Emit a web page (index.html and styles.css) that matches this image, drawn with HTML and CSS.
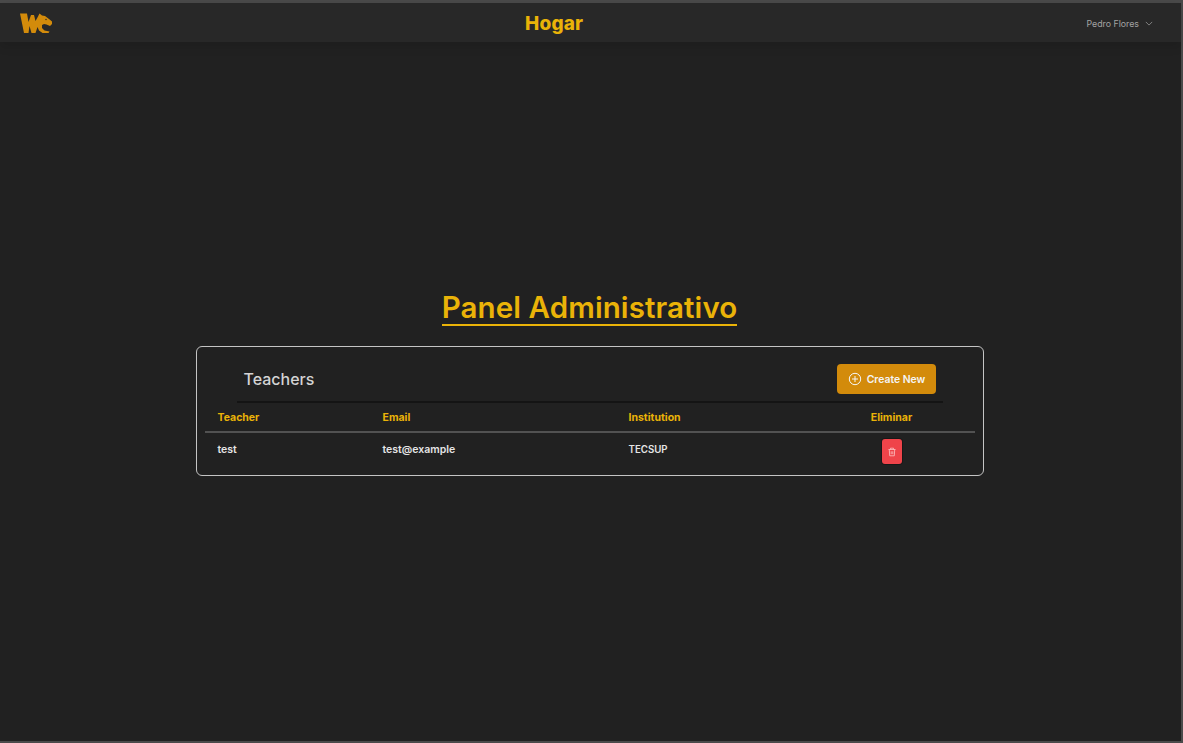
FILE: index.html
```html
<!DOCTYPE html>
<html lang="es">
<head>
<meta charset="utf-8">
<title>Hogar</title>
<link rel="stylesheet" href="styles.css">
</head>
<body>
<div class="frame">
  <header class="topbar">
    <svg class="logo" viewBox="20 11 33 22" aria-hidden="true">
      <path class="logo-fill" d="M20 12.500L27 12.500L28.500 21L31 14L34 14L35.500 20L38 15.500L39.500 12.500L42 14.500L45 15L49 18L52 20.500L52 23L50 25L46.500 23.500L44 23L42 24L42 27L44.500 29.500L49.500 30.500L48.500 32L42.500 32L39 29.500L37.500 26L35.500 32L31.500 32L29.500 25L28.500 32L24 32Z"/>
      <circle class="logo-eye" cx="46" cy="18.500" r=".7"/>
    </svg>
    <h1 class="brand">Hogar</h1>
    <div class="user">
      <span>Pedro Flores</span>
      <svg class="chev" viewBox="0 0 10 6" aria-hidden="true"><path d="M1 1l4 4 4-4"/></svg>
    </div>
  </header>
  <main class="content">
    <h2 class="page-title">Panel Administrativo</h2>
    <section class="card">
      <div class="card-head">
        <h3 class="card-title">Teachers</h3>
        <button class="create" type="button">
          <svg class="plus" viewBox="0 0 14 14" aria-hidden="true"><circle cx="7" cy="7" r="5.700"/><path d="M7 4v6M4 7h6"/></svg>
          <span class="create-label">Create New</span>
        </button>
      </div>
      <table class="teachers">
        <colgroup><col class="c1"><col class="c2"><col class="c3"><col class="c4"></colgroup>
        <thead>
          <tr><th>Teacher</th><th>Email</th><th>Institution</th><th class="mid">Eliminar</th></tr>
        </thead>
        <tbody>
          <tr>
            <td>test</td><td>test@example</td><td class="inst">TECSUP</td>
            <td class="mid">
              <button class="del" type="button" aria-label="Eliminar">
                <svg viewBox="0 0 10 10" aria-hidden="true"><path d="M1.500 2.500h7M3.500 2.500V1.200h3v1.300M2.300 2.500l.4 6.300h4.600l.4-6.300M4.200 4.300v2.900M5.800 4.300v2.900"/></svg>
              </button>
            </td>
          </tr>
        </tbody>
      </table>
    </section>
  </main>
</div>
</body>
</html>
```
FILE: styles.css
```css
* { box-sizing: border-box; }
html, body { margin: 0; height: 100%; }
body { background: #212121; font-family: "Inter", "Liberation Sans", sans-serif; overflow: hidden; }
.frame {
  height: 743px;
  display: flex;
  flex-direction: column;
  border-top: 3px solid #4a4a4a;
  border-right: 2px solid #4a4a4a;
  border-bottom: 2px solid #4a4a4a;
}
.topbar {
  height: 39px;
  flex: none;
  background: #282828;
  box-shadow: 0 4px 10px rgba(0,0,0,.12);
  display: grid;
  grid-template-columns: 505px auto 1fr;
  align-items: center;
  padding: 0 28px 0 20px;
}
.logo { width: 33px; height: 22px; }
.logo-fill { fill: #d38b0b; }
.logo-eye { fill: #282828; }
.brand { margin: 2px 0 0; color: #eab308; font-size: 19px; font-weight: 800; line-height: 1; letter-spacing: .2px; }
.user { justify-self: end; display: flex; align-items: center; gap: 6px; color: #a3a3a3; font-size: 8.800px; margin-top: 1px; }
.chev { width: 8px; height: 5px; fill: none; stroke: #a3a3a3; stroke-width: .9; }
.content { flex: 1; display: flex; flex-direction: column; align-items: center; padding: 248px 2px 0 0; }
.page-title { margin: 0; color: #eab308; font-size: 29.500px; font-weight: 600; letter-spacing: .1px; line-height: 34px; border-bottom: 2px solid #eab308; }
.card {
  width: 788px;
  height: 130px;
  margin-top: 20px;
  border: 1px solid #c4c4c4;
  border-radius: 6px;
  padding: 0 8px;
}
.card-head {
  margin: 0 32px;
  height: 56px;
  border-bottom: 2px solid #141414;
  display: flex;
  justify-content: space-between;
  align-items: center;
  padding: 9px 7px 0 7px;
}
.card-title { margin: 0; color: #d4d4d4; font-size: 16px; font-weight: 500; }
.create {
  width: 99px; height: 30px;
  background: #d38b0b; color: #f5f5f5;
  border: 0; border-radius: 4px;
  font: 600 10.400px "Inter", "Liberation Sans", sans-serif;
  display: flex; align-items: center; justify-content: center; gap: 5px;
  padding: 1px 0 0 1px;
}
.create-label { padding-top: 1px; }
.plus { width: 14px; height: 14px; fill: none; stroke: #f5f5f5; stroke-width: 1; }
.teachers { width: 770px; table-layout: fixed; border-collapse: collapse; }
.c1 { width: 165px; } .c2 { width: 246px; } .c3 { width: 193px; } .c4 { width: 166px; }
.teachers th {
  height: 29px; padding: 0 12px 0 13px; text-align: left;
  color: #eab308; font-size: 10.500px; font-weight: 700;
  border-bottom: 2px solid #525252;
}
.teachers td {
  height: 34px; padding: 10px 12px 0 13px;
  color: #e5e5e5; font-size: 10.500px; font-weight: 600;
  vertical-align: top;
}
.teachers td.inst { font-size: 9.700px; padding-top: 11px; }
.teachers .mid { text-align: center; padding-left: 12px; }
.teachers td.mid { padding-top: 6px; }
.del {
  width: 20px; height: 25px; padding: 0;
  background: #ef444a; border: 0; border-radius: 3px;
  box-shadow: 0 0 0 1px rgba(0,0,0,.25);
  display: inline-flex; align-items: center; justify-content: center;
}
.del svg { width: 10px; height: 10px; fill: none; stroke: #fbc4c4; stroke-width: .8; }
```
